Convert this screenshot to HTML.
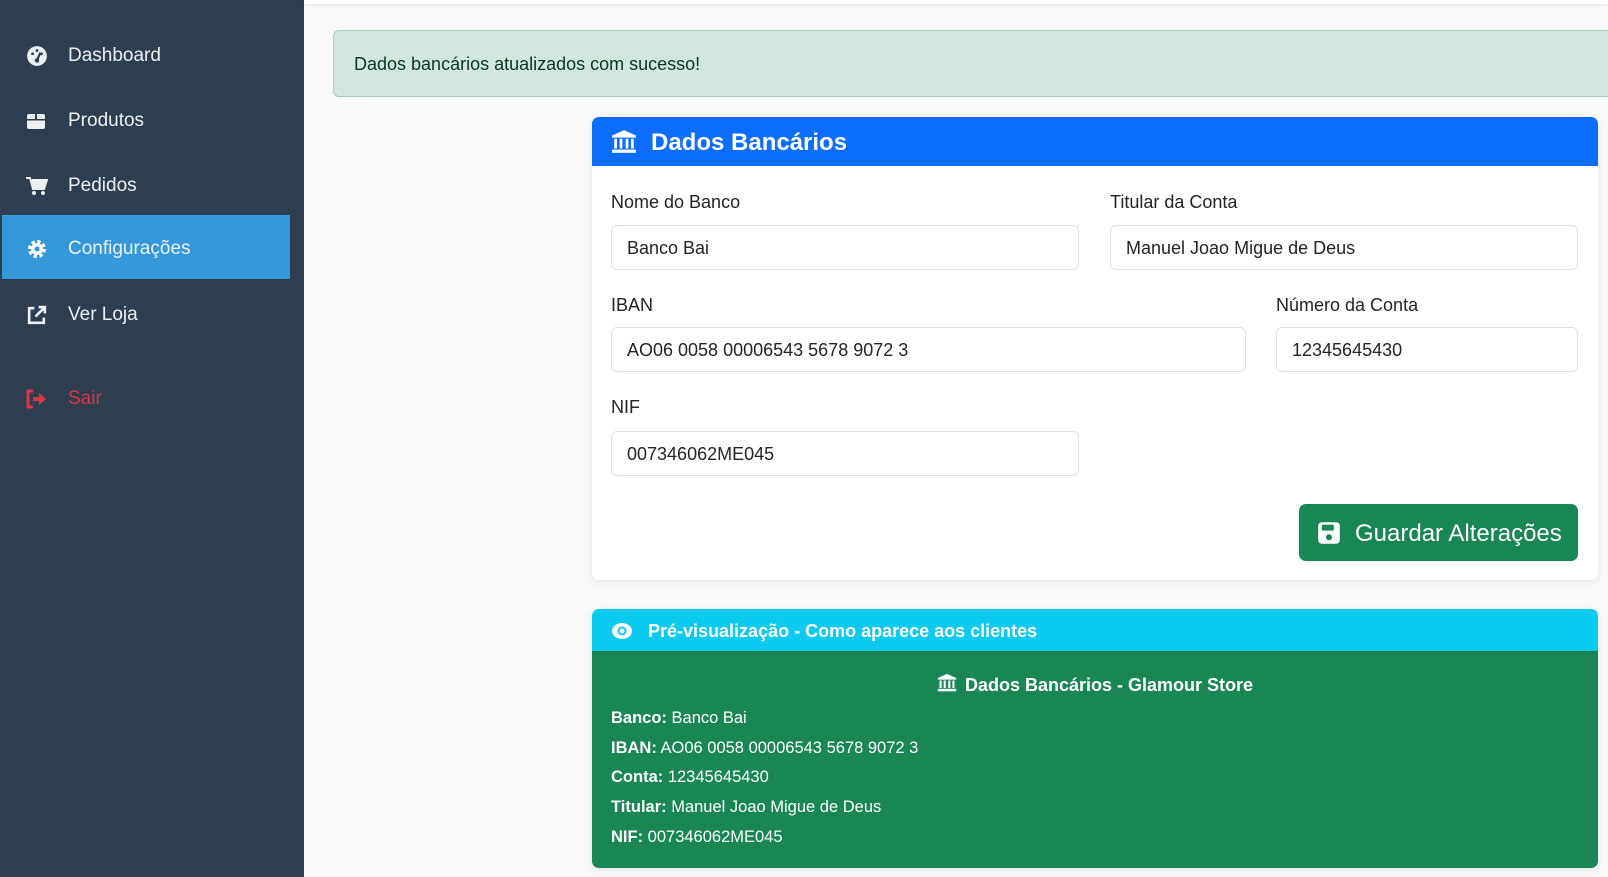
<!DOCTYPE html>
<html><head><meta charset="utf-8"><style>
*{box-sizing:border-box;margin:0;padding:0}
body{width:1608px;height:877px;overflow:hidden;background:#f8f9fa;font-family:"Liberation Sans",sans-serif;color:#212529;position:relative}
.sb{position:absolute;left:0;top:0;width:304px;height:877px;background:#2c3e50}
.mi{position:absolute;left:2px;width:288px;height:64px;color:#ecf0f1;font-size:19px;display:flex;align-items:center;padding-top:4px}
.mi span{position:absolute;left:66px}
.mi svg{position:absolute;left:24px}
.act{background:#3498db}
.topbar{position:absolute;left:304px;top:0;right:0;height:4px;background:#fff;box-shadow:0 1px 4px rgba(0,0,0,.1)}
.alert{position:absolute;left:333px;top:30px;width:1290px;height:67px;background:#d1e7dd;border:1px solid #a3cfbb;border-radius:6px;color:#0a3622;font-size:18px;padding-left:20px;line-height:67px}
.card{position:absolute;left:592px;width:1006px;background:#fff;border-radius:7px;box-shadow:0 2px 8px rgba(0,0,0,.08);overflow:hidden}
.h1{height:49px;background:#0d6efd;color:#fff;font-size:24px;font-weight:bold;display:flex;align-items:center;padding-left:59px;position:relative;padding-top:3px}
.lbl{position:absolute;font-size:18px;color:#212529}
.inp{position:absolute;height:45px;border:1px solid #dee2e6;border-radius:6px;font-size:18px;padding-left:15px;line-height:45px;background:#fff}
.btn{position:absolute;left:1299px;top:504px;width:279px;height:57px;background:#198754;border-radius:7px;color:#fff;font-size:24px;line-height:59px;padding-left:56px}
.h2{height:42px;background:#0dcaf0;color:#fff;font-size:18px;font-weight:bold;display:flex;align-items:center;padding-left:56px;position:relative;padding-top:3px}
.bd{background:#198754;color:#fff;height:217px;position:relative;font-size:16.5px}
.bd p{position:absolute;left:19px}
</style></head><body>
<div class="sb">
<div class="mi" style="top:22px"><svg width="22" height="22" viewBox="0 0 20 20"><circle cx="10" cy="10" r="9" fill="#ecf0f1"/><circle cx="6" cy="8" r="1.3" fill="#2c3e50"/><circle cx="10" cy="5" r="1.3" fill="#2c3e50"/><circle cx="14" cy="8" r="1.3" fill="#2c3e50"/><path d="M10 14 L13 7" stroke="#2c3e50" stroke-width="2"/><circle cx="10" cy="14" r="2" fill="#2c3e50"/></svg><span>Dashboard</span></div>
<div class="mi" style="top:87px"><svg width="20" height="20" viewBox="0 0 20 20"><rect x="1" y="3" width="18" height="15" rx="2" fill="#ecf0f1"/><rect x="1" y="8" width="18" height="1.5" fill="#2c3e50"/><rect x="9" y="3" width="2" height="5" fill="#2c3e50"/></svg><span>Produtos</span></div>
<div class="mi" style="top:152px"><svg width="22" height="20" viewBox="0 0 22 20"><path d="M0 2h4l3 11h11l3-9H6" fill="#ecf0f1" stroke="#ecf0f1" stroke-width="2"/><circle cx="8" cy="17" r="2" fill="#ecf0f1"/><circle cx="17" cy="17" r="2" fill="#ecf0f1"/></svg><span>Pedidos</span></div>
<div class="mi act" style="top:215px"><svg width="22" height="22" viewBox="0 0 20 20"><circle cx="10" cy="10" r="6.5" fill="none" stroke="#fff" stroke-width="3.5" stroke-dasharray="3 2.1"/><circle cx="10" cy="10" r="5.5" fill="#fff"/><circle cx="10" cy="10" r="2.3" fill="#3498db"/></svg><span>Configurações</span></div>
<div class="mi" style="top:281px"><svg width="21" height="21" viewBox="0 0 20 20"><path d="M8 3H3v14h14v-5" fill="none" stroke="#ecf0f1" stroke-width="2.5"/><path d="M9 11 L17 3 M12 2h6v6" fill="none" stroke="#ecf0f1" stroke-width="2.5"/></svg><span>Ver Loja</span></div>
<div class="mi" style="top:365px;color:#dc3545"><svg width="22" height="20" viewBox="0 0 22 20"><path d="M7 2H2v16h5" fill="none" stroke="#dc3545" stroke-width="3"/><path d="M7 8h6V4l7 6-7 6v-4H7z" fill="#dc3545"/></svg><span>Sair</span></div>
</div>
<div class="topbar"></div>
<div class="alert">Dados bancários atualizados com sucesso!</div>
<div class="card" style="top:117px;height:463px">
<div class="h1"><svg style="position:absolute;left:19px;top:12px" width="26" height="26" viewBox="0 0 24 24" fill="#fff"><path d="M12 1L1 6v2h22V6z"/><rect x="3" y="9" width="2.5" height="9"/><rect x="8" y="9" width="2.5" height="9"/><rect x="13.5" y="9" width="2.5" height="9"/><rect x="18.5" y="9" width="2.5" height="9"/><rect x="1" y="19" width="22" height="3"/></svg>Dados Bancários</div>
</div>
<div class="lbl" style="left:611px;top:192px">Nome do Banco</div>
<div class="inp" style="left:611px;top:225px;width:468px">Banco Bai</div>
<div class="lbl" style="left:1110px;top:192px">Titular da Conta</div>
<div class="inp" style="left:1110px;top:225px;width:468px">Manuel Joao Migue de Deus</div>
<div class="lbl" style="left:611px;top:295px">IBAN</div>
<div class="inp" style="left:611px;top:327px;width:635px">AO06 0058 00006543 5678 9072 3</div>
<div class="lbl" style="left:1276px;top:295px">Número da Conta</div>
<div class="inp" style="left:1276px;top:327px;width:302px">12345645430</div>
<div class="lbl" style="left:611px;top:397px">NIF</div>
<div class="inp" style="left:611px;top:431px;width:468px">007346062ME045</div>
<div class="btn"><svg style="position:absolute;left:18px;top:17px" width="24" height="24" viewBox="0 0 20 20"><rect x="1" y="1" width="18" height="18" rx="3" fill="#fff"/><rect x="4" y="3" width="10" height="5" rx="1" fill="#198754"/><circle cx="10" cy="13.5" r="2.5" fill="#198754"/></svg>Guardar Alterações</div>
<div class="card" style="top:609px;height:259px">
<div class="h2"><svg style="position:absolute;left:19px;top:12px" width="22" height="20" viewBox="0 0 22 20"><ellipse cx="11" cy="10" rx="10" ry="8" fill="#fff"/><circle cx="11" cy="10" r="4.5" fill="#0dcaf0"/><circle cx="11" cy="10" r="2.5" fill="#fff"/></svg>Pré-visualização - Como aparece aos clientes</div>
<div class="bd">
<div style="position:absolute;left:0;right:0;top:22px;text-align:center;font-weight:bold;font-size:18px"><svg width="20" height="20" viewBox="0 0 24 24" fill="#fff" style="vertical-align:-2px;margin-right:8px"><path d="M12 1L1 6v2h22V6z"/><rect x="3" y="9" width="2.5" height="9"/><rect x="8" y="9" width="2.5" height="9"/><rect x="13.5" y="9" width="2.5" height="9"/><rect x="18.5" y="9" width="2.5" height="9"/><rect x="1" y="19" width="22" height="3"/></svg>Dados Bancários - Glamour Store</div>
<p style="top:58px"><b>Banco:</b> Banco Bai</p>
<p style="top:88px"><b>IBAN:</b> AO06 0058 00006543 5678 9072 3</p>
<p style="top:117px"><b>Conta:</b> 12345645430</p>
<p style="top:147px"><b>Titular:</b> Manuel Joao Migue de Deus</p>
<p style="top:177px"><b>NIF:</b> 007346062ME045</p>
</div></div>
</body></html>
